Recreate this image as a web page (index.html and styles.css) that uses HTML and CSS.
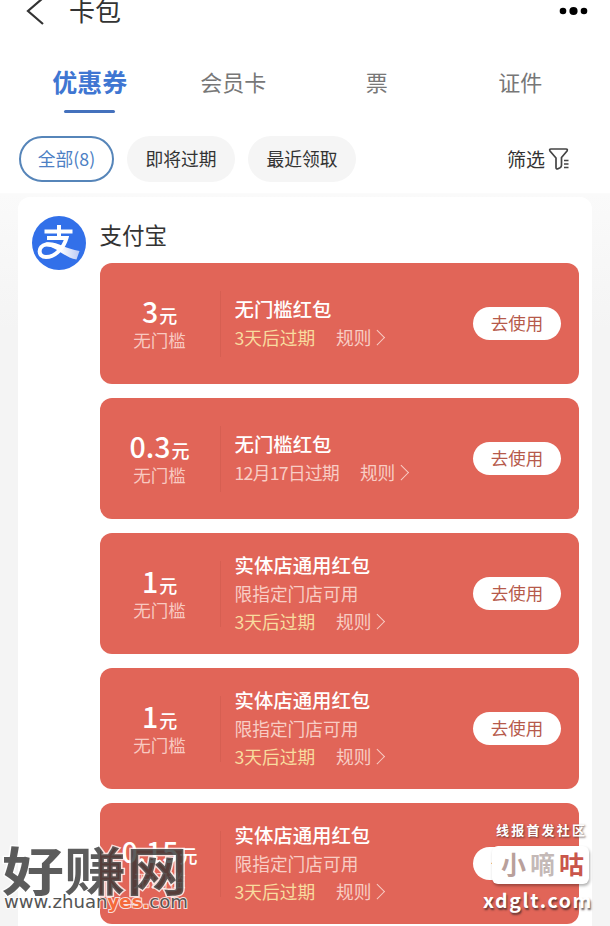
FILE: index.html
```html
<!DOCTYPE html>
<html lang="zh-CN">

<head>
    <meta charset="utf-8">
    <title>卡包</title>
    <link rel="stylesheet" href="styles.css">
</head>

<body>
    <div class="page">
        <div class="top">
            <div class="head">
                <svg class="back" width="20" height="30" viewBox="0 0 20 30"><path d="M18 2L3 15l15 13" /></svg>
                <h1>卡包</h1>
                <svg class="more" width="30" height="10" viewBox="0 0 30 10"><circle cx="4" cy="5" r="3.3" /><circle cx="14.5" cy="5" r="4.1" /><circle cx="25" cy="5" r="3.3" /></svg>
            </div>
            <div class="tabs">
                <a class="active">优惠券</a>
                <a>会员卡</a>
                <a>票</a>
                <a>证件</a>
            </div>
            <div class="filters">
                <a class="pill on">全部(8)</a>
                <a class="pill">即将过期</a>
                <a class="pill">最近领取</a>
                <a class="sift">筛选
                    <svg width="22" height="24" viewBox="0 0 22 24"><path d="M3 2h15q2 0 1 2l-5.500 6.500v4M3 2q-2 0-1 2l6 7v9.500q0 2 2 1.200l2-1q1.500-.8 1.500-2.500v-4M16 13.500h4.500M16 17h4.500M16 20.500h4.500" /></svg>
                </a>
            </div>
        </div>

        <div class="shop">
            <svg class="logo" width="54" height="54" viewBox="0 0 54 54">
                <defs>
                    <linearGradient id="fade" gradientUnits="userSpaceOnUse" x1="28" y1="0" x2="48" y2="0">
                        <stop offset="0" stop-color="#fff" />
                        <stop offset="1" stop-color="#b9c8f5" />
                    </linearGradient>
                </defs>
                <circle cx="27" cy="27" r="27" fill="#3270e9" />
                <path class="tail" d="M14 26.500C25 25 33 33 47.500 35L44.500 43.500C33 42 25 31 14 30Z" fill="url(#fade)" />
                <path class="line" d="M12.500 15.500h28M27 9v13M15 22h19.500C32 31 24 41 14 41C5.500 41 5.500 30 14 28.500q4-.5 9 1.500" />
            </svg>
            <div class="main">
                <h2>支付宝</h2>
                <div class="coupon">
                    <div class="price">
                        <p class="num"><b>3</b>元</p>
                        <p class="limit">无门槛</p>
                    </div>
                    <div class="info">
                        <h3>无门槛红包</h3>
                        <p><span class="soon">3天后过期</span><a class="rule">规则<i></i></a></p>
                    </div>
                    <a class="use">去使用</a>
                </div>
                <div class="coupon">
                    <div class="price">
                        <p class="num"><b>0.3</b>元</p>
                        <p class="limit">无门槛</p>
                    </div>
                    <div class="info">
                        <h3>无门槛红包</h3>
                        <p><span class="date">12月17日过期</span><a class="rule">规则<i></i></a></p>
                    </div>
                    <a class="use">去使用</a>
                </div>
                <div class="coupon">
                    <div class="price">
                        <p class="num"><b>1</b>元</p>
                        <p class="limit">无门槛</p>
                    </div>
                    <div class="info">
                        <h3>实体店通用红包</h3>
                        <p>限指定门店可用</p>
                        <p><span class="soon">3天后过期</span><a class="rule">规则<i></i></a></p>
                    </div>
                    <a class="use">去使用</a>
                </div>
                <div class="coupon">
                    <div class="price">
                        <p class="num"><b>1</b>元</p>
                        <p class="limit">无门槛</p>
                    </div>
                    <div class="info">
                        <h3>实体店通用红包</h3>
                        <p>限指定门店可用</p>
                        <p><span class="soon">3天后过期</span><a class="rule">规则<i></i></a></p>
                    </div>
                    <a class="use">去使用</a>
                </div>
                <div class="coupon">
                    <div class="price">
                        <p class="num"><b>0.15</b>元</p>
                        <p class="limit">无门槛</p>
                    </div>
                    <div class="info">
                        <h3>实体店通用红包</h3>
                        <p>限指定门店可用</p>
                        <p><span class="soon">3天后过期</span><a class="rule">规则<i></i></a></p>
                    </div>
                    <a class="use">去使用</a>
                </div>
            </div>
        </div>

        <!-- 水印 -->
        <svg class="mark-left" width="200" height="84" viewBox="0 0 200 84">
            <text class="mark-name" x="2" y="59" textLength="186" lengthAdjust="spacingAndGlyphs" transform="matrix(1 0 0 .86 0 5)">好赚网</text>
            <text class="mark-url" x="4" y="73" textLength="184" lengthAdjust="spacingAndGlyphs">www.zhuan<tspan class="hot">yes.</tspan>com</text>
        </svg>
        <div class="mark-right">
            <p class="slogan">线报首发社区</p>
            <p class="badge"><span class="xiao">小</span><span class="di">嘀</span><span class="gu">咕</span></p>
            <p class="site">xdglt.com</p>
        </div>
    </div>
</body>

</html>
```
FILE: styles.css
```css
body {
    margin: 0;
    padding: 0;
    font-family: "Noto Sans CJK SC", sans-serif;
    color: #333;
}

h1, h2, h3, p {
    margin: 0;
    font-weight: normal;
}

a {
    text-decoration: none;
    cursor: pointer;
}

.page {
    position: relative;
    height: 926px;
    overflow: hidden;
    background: linear-gradient(#fafafa 194px, #f4f4f4 330px);
}

.top {
    height: 193px;
    background: #fff;
    border-bottom: 1px solid #fbfbfb;
}

/* 标题栏 */
.head {
    display: flex;
    align-items: center;
    height: 22px;
    padding: 0 21px 0 25px;
}

.head h1 {
    flex: 1;
    margin-left: 24px;
    font-size: 26px;
    line-height: 22px;
    margin-top: -3px;
}

.back {
    fill: none;
    stroke: #333;
    stroke-width: 2.2;
}

.more {
    fill: #000;
}

.tabs {
    display: grid;
    grid-template-columns: repeat(4, 1fr);
    margin-top: 36px;
    padding: 0 18px;
    height: 55px;
    text-align: center;
    font-size: 22px;
    line-height: 47px;
    color: #777;
}

.tabs .active {
    font-size: 25px;
    font-weight: 700;
    color: #3f76d2;
}

.tabs .active:after {
    content: '';
    display: block;
    width: 51px;
    height: 3px;
    margin: 4.500px auto 0;
    border-radius: 2px;
    background: #4471bd;
}

.filters {
    display: flex;
    align-items: center;
    margin-top: 23px;
    padding: 0 40px 0 19px;
    gap: 13px;
}

.pill {
    box-sizing: border-box;
    width: 108px;
    height: 46px;
    line-height: 44px;
    border-radius: 23px;
    background: #f5f5f5;
    text-align: center;
    font-size: 17.800px;
}

.pill.on {
    width: 95px;
    line-height: 41px;
    border: 2px solid #5685b9;
    background: #fff;
    color: #4d7fc4;
}

.sift {
    display: flex;
    align-items: center;
    gap: 3px;
    margin-left: auto;
    font-size: 19px;
    line-height: 42px;
}

.sift svg {
    fill: none;
    stroke: #444;
    stroke-width: 1.700;
}

/* 商家 */
.shop {
    display: flex;
    gap: 14px;
    box-sizing: border-box;
    width: 574px;
    height: 760px;
    margin: 3px 0 0 18px;
    padding: 19px 13px 0 13.500px;
    border-radius: 12px;
    background: #fff;
}

.logo {
    flex: none;
}

.logo .line {
    fill: none;
    stroke: #fff;
    stroke-width: 4;
}

.main {
    width: 480px;
}

.main h2 {
    height: 47px;
    font-size: 22.500px;
    line-height: 37px;
}

/* 红包 */
.coupon {
    display: flex;
    align-items: center;
    box-sizing: border-box;
    height: 121px;
    margin-bottom: 14px;
    padding-right: 18px;
    border-radius: 12px;
    background: #e16558;
    color: #fff;
}

.price {
    width: 120px;
    height: 66px;
    border-right: 1px solid #d65f52;
    text-align: center;
}

.num {
    font-size: 18px;
    font-weight: 500;
    line-height: 36px;
    margin-top: 2px;
    height: 35px;
}

.num b {
    margin-right: 1px;
    font-size: 28.500px;
    font-weight: 500;
}

.limit {
    font-size: 17.500px;
    line-height: 24px;
    color: #f8c9c1;
}

.info {
    flex: 1;
    margin: -2px 0 0 14px;
    font-size: 17.700px;
    line-height: 28px;
    color: #f8cdc5;
}

.info h3 {
    font-size: 19.400px;
    line-height: 29px;
    font-weight: 500;
    color: #fff;
}

.info p {
    display: flex;
}

.soon {
    color: #f8dc9f;
}

.date {
    letter-spacing: -0.7px;
}

.rule {
    display: flex;
    align-items: center;
    margin-left: 21px;
}

.rule i {
    width: 9.500px;
    height: 9.500px;
    margin-left: 1px;
    border-top: 1.200px solid #f8cdc5;
    border-right: 1.200px solid #f8cdc5;
    transform: rotate(45deg);
}

.use {
    width: 88px;
    height: 33px;
    border-radius: 17px;
    background: #fff;
    color: #b65a4b;
    text-align: center;
    font-size: 17.500px;
    line-height: 31px;
}

/* 水印 */
.mark-left {
    position: absolute;
    left: 0;
    top: 835px;
}

.mark-left text {
    paint-order: stroke;
    stroke: rgba(255, 255, 255, 0.8);
    stroke-width: 3px;
}

.mark-name {
    font-size: 61px;
    font-weight: 700;
    fill: #333;
    fill-opacity: 0.8;
}

.mark-left .mark-url {
    font-family: "DejaVu Sans", sans-serif;
    font-size: 17px;
    fill: #555;
    stroke-width: 2px;
}

.mark-url .hot {
    font-weight: 700;
    fill: #f4693a;
}

.mark-right {
    position: absolute;
    left: 480px;
    top: 820px;
    width: 130px;
    color: #fff;
    text-shadow: 1px 1px 2px rgba(60, 40, 40, 0.7);
}

.mark-right p {
    font-weight: 700;
}

.slogan {
    padding-left: 16px;
    font-size: 13px;
    letter-spacing: 2.200px;
    line-height: 20px;
    white-space: nowrap;
}

.badge {
    display: flex;
    width: 88px;
    height: 38px;
    margin: 6px 0 0 12px;
    padding-left: 9px;
    gap: 4px;
    border-radius: 6px;
    background: #fff;
    box-shadow: 1px 2px 3px rgba(0, 0, 0, 0.3);
    font-size: 25px;
    line-height: 35px;
    text-shadow: none;
}

.badge .xiao {
    color: #b9a09b;
}

.badge .di {
    color: #c4b9b7;
}

.badge .gu {
    color: #c9564b;
}

.site {
    margin-top: 3px;
    padding-left: 3px;
    font-size: 19.500px;
    letter-spacing: 1.600px;
    line-height: 26px;
    text-shadow: 1px 2px 2px rgba(60, 40, 40, 0.8);
}
```
